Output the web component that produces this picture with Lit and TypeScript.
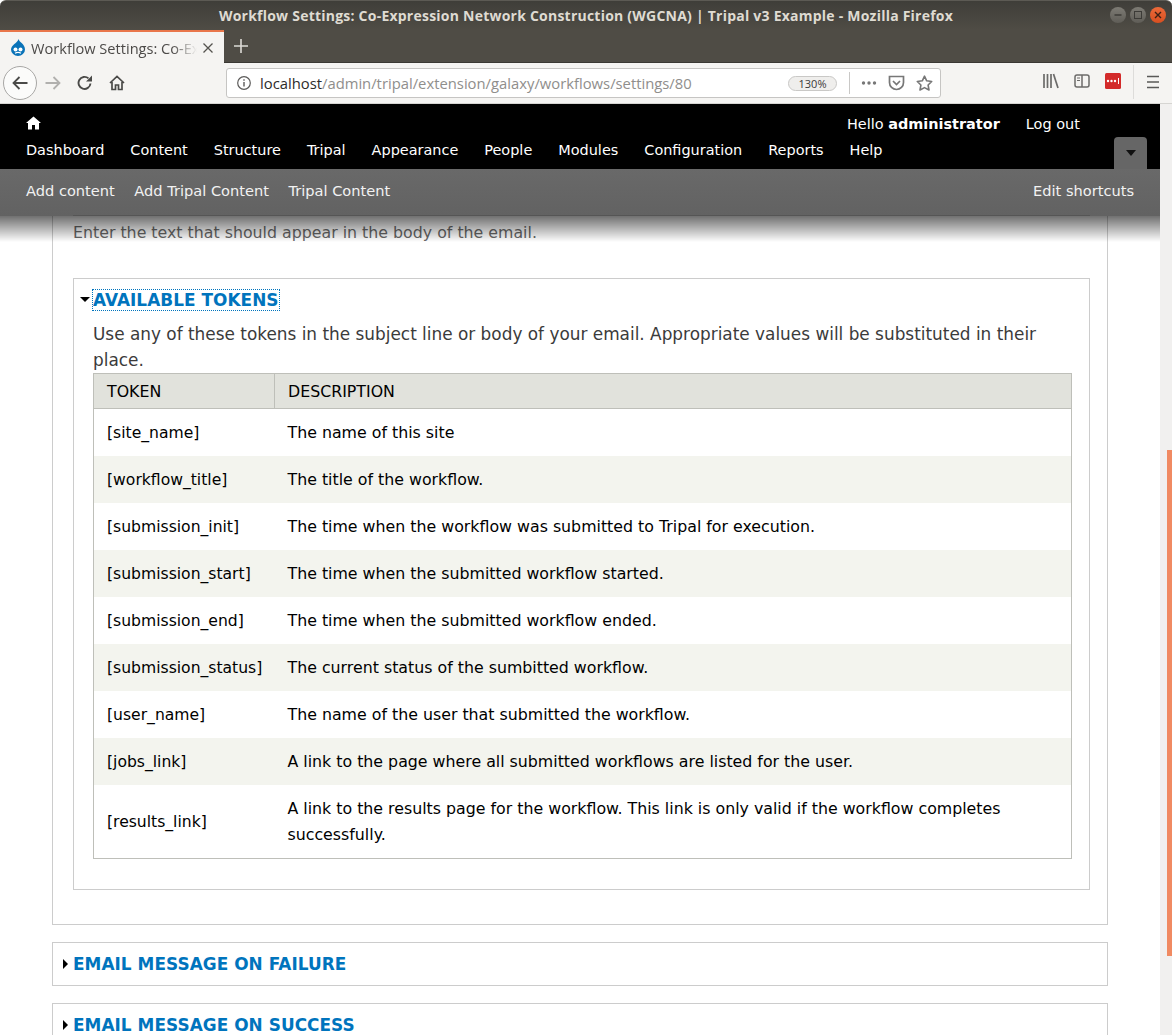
import { LitElement, css, html, svg } from "lit";
import { customElement } from "lit/decorators.js";

const ADMIN_LINKS = [
  "Dashboard",
  "Content",
  "Structure",
  "Tripal",
  "Appearance",
  "People",
  "Modules",
  "Configuration",
  "Reports",
  "Help",
];

const SHORTCUTS = ["Add content", "Add Tripal Content", "Tripal Content"];

const TOKENS = [
  ["[site_name]", "The name of this site"],
  ["[workflow_title]", "The title of the workflow."],
  ["[submission_init]", "The time when the workflow was submitted to Tripal for execution."],
  ["[submission_start]", "The time when the submitted workflow started."],
  ["[submission_end]", "The time when the submitted workflow ended."],
  ["[submission_status]", "The current status of the sumbitted workflow."],
  ["[user_name]", "The name of the user that submitted the workflow."],
  ["[jobs_link]", "A link to the page where all submitted workflows are listed for the user."],
  [
    "[results_link]",
    "A link to the results page for the workflow. This link is only valid if the workflow completes successfully.",
  ],
];

const icon = (w: number, h: number, body: unknown) => html`
  <svg width=${w} height=${h} viewBox="0 0 ${w} ${h}" fill="none">${body}</svg>
`;

@customElement("app-root")
export class AppRoot extends LitElement {
  static styles = css`
    :host {
      display: block;
      width: 1172px;
      height: 1035px;
      overflow: hidden;
      font-family: "DejaVu Sans", sans-serif;
      background: #fff;
    }
    .titlebar {
      height: 30px;
      display: flex;
      align-items: center;
      justify-content: center;
      position: relative;
      background: linear-gradient(#3f3e39, #4f4c45);
      border-top: 1px solid #5c5a54;
      box-sizing: border-box;
      border-radius: 6px 6px 0 0;
      color: #dfdbd2;
      font-family: "Open Sans", "DejaVu Sans", sans-serif;
      font-size: 14px;
      font-weight: 700;
      letter-spacing: 0.23px;
    }
    .winbtns {
      position: absolute;
      right: 6px;
      top: 6px;
      display: flex;
      gap: 4px;
    }
    .winbtn {
      width: 16px;
      height: 16px;
      border-radius: 50%;
      background: linear-gradient(#7d7b74, #5f5d57);
      display: flex;
      align-items: center;
      justify-content: center;
    }
    .winbtn.close {
      background: linear-gradient(#ec6a3a, #d84f20);
    }
    .tabbar {
      height: 33px;
      display: flex;
      background: #4f4c45;
      box-sizing: border-box;
      border-bottom: 1px solid #3a3833;
    }
    .tab {
      width: 224px;
      height: 33px;
      box-sizing: border-box;
      border-top: 2px solid #e9764a;
      background: #f5f4f2;
      display: flex;
      align-items: center;
      padding-left: 10px;
      color: #4c4a48;
      font-family: "Open Sans", "DejaVu Sans", sans-serif;
      font-size: 14.6px;
    }
    .tab-title {
      width: 166px;
      margin-left: 5px;
      overflow: hidden;
      white-space: nowrap;
      -webkit-mask-image: linear-gradient(90deg, #000 85%, transparent);
      mask-image: linear-gradient(90deg, #000 85%, transparent);
    }
    .tab-close {
      margin-left: 6px;
      display: flex;
    }
    .newtab {
      width: 34px;
      display: flex;
      align-items: center;
      justify-content: center;
    }
    .navbar {
      height: 41px;
      background: #f5f4f2;
      border-bottom: 1px solid #d6d5d2;
      box-sizing: border-box;
      display: flex;
      align-items: center;
      position: relative;
    }
    .back {
      width: 34px;
      height: 34px;
      margin-left: 3px;
      box-sizing: border-box;
      border: 1px solid #a8a7a5;
      border-radius: 50%;
      background: #fbfbfa;
      display: flex;
      align-items: center;
      justify-content: center;
    }
    .navicons {
      display: flex;
      align-items: center;
      gap: 16px;
      margin-left: 8px;
    }
    .urlbar {
      position: absolute;
      left: 226px;
      top: 5px;
      width: 715px;
      height: 30px;
      box-sizing: border-box;
      background: #fff;
      border: 1px solid #c6c5c3;
      border-radius: 3px;
      display: flex;
      align-items: center;
      padding-left: 9px;
      font-family: "Open Sans", "DejaVu Sans", sans-serif;
      font-size: 14.8px;
      color: #8f8e8c;
    }
    .host {
      color: #2d2c2b;
      margin-left: 8px;
    }
    .zoomchip {
      position: absolute;
      left: 561px;
      top: 7px;
      width: 49px;
      height: 15px;
      box-sizing: border-box;
      border: 1px solid #c9c8c6;
      border-radius: 8px;
      background: #efeeec;
      color: #3a3938;
      font-size: 11px;
      line-height: 13px;
      text-align: center;
    }
    .urlsep {
      position: absolute;
      left: 622px;
      top: 3px;
      width: 1px;
      height: 22px;
      background: #c9c8c6;
    }
    .urlicons {
      position: absolute;
      left: 634px;
      top: 6px;
      display: flex;
      align-items: center;
      gap: 11px;
    }
    .tools {
      position: absolute;
      left: 1043px;
      top: 10px;
      display: flex;
      align-items: center;
      gap: 15px;
    }
    .toolsep {
      width: 1px;
      height: 34px;
      background: #dddcda;
      position: absolute;
      left: 1133px;
      top: 2px;
    }
    .menu {
      position: absolute;
      left: 1147px;
      top: 12px;
      display: flex;
    }
    .viewport {
      height: 931px;
      position: relative;
      display: flex;
      overflow: hidden;
    }
    .scrollbar {
      width: 12px;
      background: #f1f0ef;
      position: relative;
    }
    .thumb {
      position: absolute;
      left: 7px;
      right: 0;
      top: 346px;
      height: 506px;
      background: #f08a62;
    }
    .page {
      width: 1160px;
      height: 931px;
      overflow: hidden;
      box-sizing: border-box;
      padding: 0 52px;
      background: #fff;
    }
    .toolbar {
      position: absolute;
      left: 0;
      top: 0;
      width: 1160px;
      z-index: 2;
      color: #fff;
    }
    .toolbar::after {
      content: "";
      position: absolute;
      left: 0;
      right: 0;
      top: 100%;
      height: 26px;
      background: linear-gradient(rgba(0, 0, 0, 0.56), rgba(0, 0, 0, 0));
      pointer-events: none;
    }
    .tb-top {
      height: 65px;
      background: #000;
      box-sizing: border-box;
      position: relative;
      font-size: 14.45px;
    }
    .tb-home {
      position: absolute;
      left: 26px;
      top: 12px;
      display: flex;
    }
    .tb-user {
      position: absolute;
      left: 847px;
      top: 11px;
      display: flex;
      gap: 26px;
      line-height: 18px;
    }
    .tb-user b {
      font-weight: 700;
    }
    .tb-links {
      position: absolute;
      left: 26px;
      top: 37px;
      display: flex;
      gap: 26px;
      line-height: 18px;
    }
    .tb-toggle {
      position: absolute;
      left: 1114px;
      top: 33px;
      width: 33px;
      height: 32px;
      background: #666;
      border-radius: 4px 4px 0 0;
      display: flex;
      align-items: center;
      justify-content: center;
    }
    .tb-shortcuts {
      height: 47px;
      position: relative;
      background: linear-gradient(#696969, #626262);
      box-sizing: border-box;
      padding: 13px 26px 0;
      display: flex;
      gap: 19.5px;
      font-size: 14.6px;
      line-height: 18px;
      color: #f2f2f2;
    }
    .tb-line {
      position: absolute;
      left: 73px;
      width: 1017px;
      bottom: 0;
      height: 1px;
      background: #555;
    }
    .tb-edit {
      margin-left: auto;
    }
    .outer {
      height: 821px;
      box-sizing: border-box;
      border: 1px solid #ccc;
      border-top: 0;
      padding: 0 17px 34px 20px;
    }
    .help {
      padding-top: 119px;
      height: 174px;
      box-sizing: border-box;
      font-size: 15.8px;
      line-height: 20px;
      color: #666;
    }
    .tokens {
      border: 1px solid #ccc;
      height: 612px;
      box-sizing: border-box;
      padding: 10px 17px 0 19px;
    }
    .legend {
      display: flex;
      align-items: center;
      height: 21px;
    }
    .arrow-down {
      width: 0;
      height: 0;
      margin-left: -13px;
      margin-right: 3px;
      border: 5px solid transparent;
      border-top-color: #000;
      border-bottom: 0;
    }
    .legend-link,
    .collapsed a {
      font-size: 16.9px;
      letter-spacing: 0.04px;
      font-weight: 700;
      color: #0074bd;
      text-transform: uppercase;
    }
    .legend-link {
      outline: 1px dotted #0074bd;
      line-height: 20px;
    }
    .intro {
      margin: 11px 0 0;
      font-size: 16.9px;
      line-height: 26px;
      color: #3b3b3b;
    }
    table {
      width: 979px;
      table-layout: fixed;
      border-collapse: collapse;
      border: 1px solid #bebfb9;
      font-size: 15.8px;
      color: #000;
    }
    th {
      height: 34px;
      padding: 0 13px;
      background: #e1e2dc;
      border-bottom: 1px solid #bebfb9;
      text-align: left;
      font-weight: 400;
      text-transform: uppercase;
    }
    th + th {
      border-left: 1px solid #bebfb9;
    }
    th:first-child {
      width: 154px;
    }
    td {
      height: 47px;
      padding: 1px 13px 0;
      line-height: 26px;
      box-sizing: border-box;
    }
    td:first-child {
      font-size: 15.6px;
    }
    tr:nth-child(even) td {
      background: #f3f4ee;
    }
    tr.tall td {
      height: 74px;
    }
    .collapsed {
      border: 1px solid #ccc;
      height: 44px;
      margin-top: 17px;
      box-sizing: border-box;
      display: flex;
      align-items: center;
      padding-left: 10px;
    }
    .arrow-right {
      width: 0;
      height: 0;
      margin-right: 5px;
      border: 5px solid transparent;
      border-left-color: #000;
      border-right: 0;
    }
  `;

  private titlebar() {
    return html`
      <div class="titlebar">
        Workflow Settings: Co-Expression Network Construction (WGCNA) | Tripal v3 Example - Mozilla Firefox
        <div class="winbtns">
          <span class="winbtn">
            ${icon(10, 10, svg`<path d="M1.5 5h7" stroke="#3c3b37" stroke-width="1.5"/>`)}
          </span>
          <span class="winbtn">
            ${icon(10, 10, svg`<rect x="1.5" y="1.5" width="7" height="7" stroke="#3c3b37"/>`)}
          </span>
          <span class="winbtn close">
            ${icon(10, 10, svg`<path d="M2 2l6 6M8 2l-6 6" stroke="#3c2015" stroke-width="1.4"/>`)}
          </span>
        </div>
      </div>
    `;
  }

  private tabbar() {
    return html`
      <div class="tabbar">
        <div class="tab">
          ${icon(
            16,
            17,
            svg`<path d="M8.5 0C9 3 15 5 15 10.5A7 6.5 0 0 1 1 10.5C1 6 7.5 4 8.5 0z" fill="#0a73b8"/>
              <circle cx="5.5" cy="10.5" r="2" fill="#fff"/><circle cx="10.5" cy="10.5" r="2" fill="#fff"/>
              <path d="M5 14.2q3-1.6 6 0" stroke="#fff" stroke-width="1.3"/>`
          )}
          <span class="tab-title">Workflow Settings: Co-Expression</span>
          <span class="tab-close">
            ${icon(10, 10, svg`<path d="M.5.5l9 9M9.5.5l-9 9" stroke="#55534f" stroke-width="1.3"/>`)}
          </span>
        </div>
        <div class="newtab">
          ${icon(14, 14, svg`<path d="M7 0v14M0 7h14" stroke="#dcdad5" stroke-width="1.6"/>`)}
        </div>
      </div>
    `;
  }

  private navbar() {
    return html`
      <div class="navbar">
        <span class="back">
          ${icon(
            16,
            14,
            svg`<path d="M15.5 7H1.5M7.5 1l-6 6 6 6" stroke="#4a4a48" stroke-width="1.8"/>`
          )}
        </span>
        <div class="navicons">
          ${icon(
            16,
            14,
            svg`<path d="M.5 7h14M8.5 1l6 6-6 6" stroke="#b1b0ae" stroke-width="1.8"/>`
          )}
          ${icon(
            16,
            16,
            svg`<path d="M13.5 8.5A6 6 0 1 1 11.5 3.4" stroke="#4a4a48" stroke-width="1.9"/>
              <path d="M15 0.5v6h-6z" fill="#4a4a48"/>`
          )}
          ${icon(
            16,
            16,
            svg`<path d="M1 8l7-6.5L15 8M3 7v7.5h3.5V10h3v4.5H13V7" stroke="#4a4a48" stroke-width="1.7"/>`
          )}
        </div>
        <div class="urlbar">
          ${icon(
            16,
            16,
            svg`<circle cx="8" cy="8" r="6.3" stroke="#5c5b5a" stroke-width="1.2"/>
              <path d="M8 7v4.5M8 4.3v1.5" stroke="#5c5b5a" stroke-width="1.4"/>`
          )}
          <span class="host">localhost</span>/admin/tripal/extension/galaxy/workflows/settings/80
          <span class="zoomchip">130%</span>
          <span class="urlsep"></span>
          <div class="urlicons">
            ${icon(
              16,
              16,
              svg`<circle cx="2.5" cy="8" r="1.7" fill="#777"/><circle cx="8" cy="8" r="1.7" fill="#777"/>
                <circle cx="13.5" cy="8" r="1.7" fill="#777"/>`
            )}
            ${icon(
              17,
              16,
              svg`<path d="M1.5 1.5h14v6a7 7 0 0 1-14 0z" stroke="#777" stroke-width="1.7"/>
                <path d="M5 6l3.5 3.5L12 6" stroke="#777" stroke-width="1.7"/>`
            )}
            ${icon(
              17,
              16,
              svg`<path d="M8.5 1.2l2.2 4.6 5 .7-3.6 3.5.9 5-4.5-2.4L4 15l.9-5L1.3 6.5l5-.7z" stroke="#777" stroke-width="1.6" stroke-linejoin="round"/>`
            )}
          </div>
        </div>
        <div class="tools">
          ${icon(
            16,
            16,
            svg`<path d="M1 1v14M4.5 1v14M8 1v14" stroke="#6c6b6a" stroke-width="1.7"/>
              <path d="M10.5 1l4.5 14" stroke="#6c6b6a" stroke-width="1.7"/>`
          )}
          ${icon(
            16,
            16,
            svg`<rect x="1" y="2" width="14" height="12" rx="2" stroke="#6c6b6a" stroke-width="1.5"/>
              <path d="M8 2v12" stroke="#6c6b6a" stroke-width="1.5"/>
              <path d="M3 5h3M3 7.5h3" stroke="#6c6b6a"/>`
          )}
          ${icon(
            16,
            16,
            svg`<rect width="16" height="16" rx="1.5" fill="#d32a2a"/>
              <circle cx="3" cy="8" r="1.2" fill="#fff"/><circle cx="6.5" cy="8" r="1.2" fill="#fff"/>
              <circle cx="10" cy="8" r="1.2" fill="#fff"/><path d="M13.5 5v6" stroke="#fff"/>`
          )}
        </div>
        <span class="toolsep"></span>
        <div class="menu">
          ${icon(
            12,
            14,
            svg`<path d="M0 1.5h12M0 7h12M0 12.5h12" stroke="#5a5958" stroke-width="1.6"/>`
          )}
        </div>
      </div>
    `;
  }

  private adminToolbar() {
    return html`
      <div class="toolbar">
        <div class="tb-top">
          <span class="tb-home">
            ${icon(
              15,
              14,
              svg`<path d="M7.5 .5L15 7h-2v6.5H9V9H6v4.5H2V7H0z" fill="#fff"/>`
            )}
          </span>
          <div class="tb-user">
            <span>Hello <b>administrator</b></span>
            <span>Log out</span>
          </div>
          <div class="tb-links">${ADMIN_LINKS.map((l) => html`<span>${l}</span>`)}</div>
          <div class="tb-toggle">
            ${icon(10, 6, svg`<path d="M0 0h10L5 6z" fill="#111"/>`)}
          </div>
        </div>
        <div class="tb-shortcuts">
          ${SHORTCUTS.map((s) => html`<span>${s}</span>`)}
          <span class="tb-edit">Edit shortcuts</span>
          <span class="tb-line"></span>
        </div>
      </div>
    `;
  }

  private tokensTable() {
    return html`
      <table>
        <thead>
          <tr><th>Token</th><th>Description</th></tr>
        </thead>
        <tbody>
          ${TOKENS.map(
            ([token, desc], i) => html`
              <tr class=${i === TOKENS.length - 1 ? "tall" : ""}>
                <td>${token}</td>
                <td>${desc}</td>
              </tr>
            `
          )}
        </tbody>
      </table>
    `;
  }

  render() {
    return html`
      ${this.titlebar()} ${this.tabbar()} ${this.navbar()}
      <div class="viewport">
        ${this.adminToolbar()}
        <div class="page">
          <div class="outer">
            <div class="help">Enter the text that should appear in the body of the email.</div>
            <div class="tokens">
              <div class="legend">
                <span class="arrow-down"></span>
                <span class="legend-link">Available tokens</span>
              </div>
              <p class="intro">
                Use any of these tokens in the subject line or body of your email. Appropriate values
                will be substituted in their place.
              </p>
              ${this.tokensTable()}
            </div>
          </div>
          <div class="collapsed">
            <span class="arrow-right"></span><a>Email message on failure</a>
          </div>
          <div class="collapsed">
            <span class="arrow-right"></span><a>Email message on success</a>
          </div>
        </div>
        <div class="scrollbar"><div class="thumb"></div></div>
      </div>
    `;
  }
}
